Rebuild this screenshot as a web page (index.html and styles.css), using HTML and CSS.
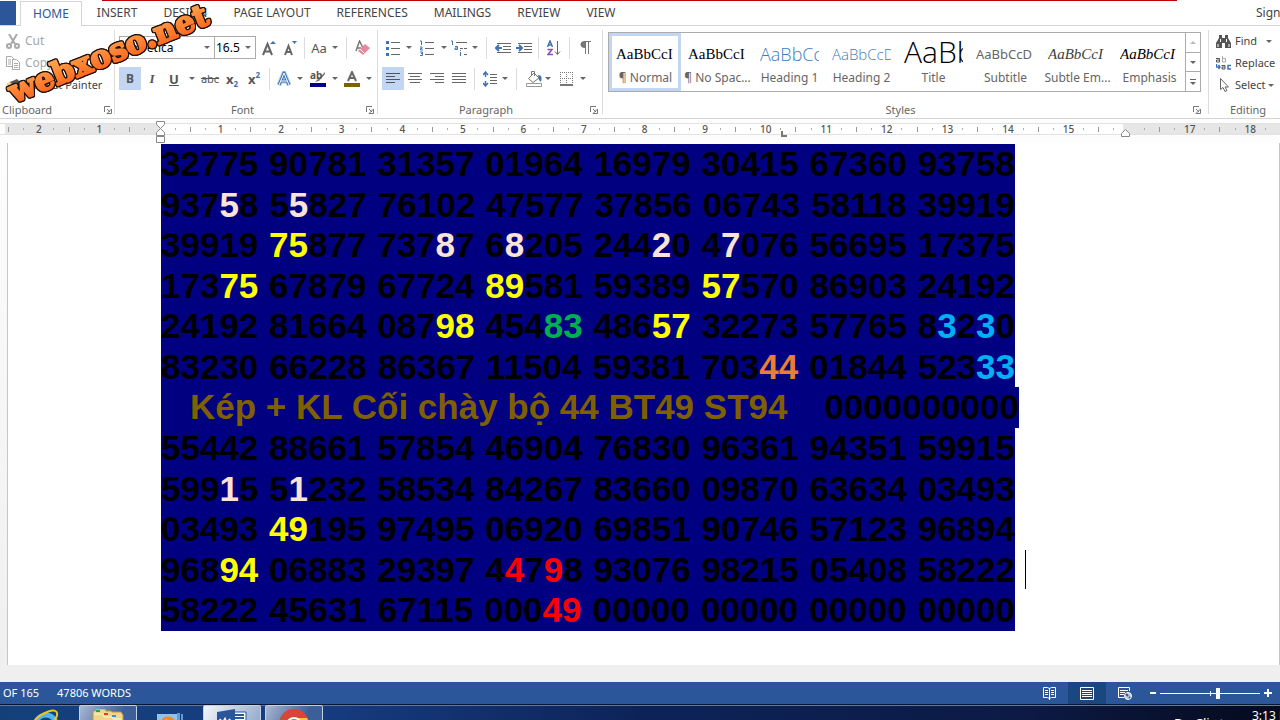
FILE: index.html
```html
<!DOCTYPE html>
<html lang="en">
<head>
<meta charset="utf-8">
<title>Document</title>
<link rel="stylesheet" href="styles.css">
</head>
<body>
<div class="app">
  <header class="tabs">
    <button class="file" aria-label="File"></button>
    <nav class="tablist">
      <button class="tab active">HOME</button>
      <button class="tab">INSERT</button>
      <button class="tab">DESIGN</button>
      <button class="tab">PAGE LAYOUT</button>
      <button class="tab">REFERENCES</button>
      <button class="tab">MAILINGS</button>
      <button class="tab">REVIEW</button>
      <button class="tab">VIEW</button>
    </nav>
    <a class="signin" href="#">Sign</a>
  </header>

  <section class="ribbon">
    <div class="group clipboard">
      <div class="commands">
        <button class="command off"><svg width="14" height="15" viewBox="0 0 14 15" fill="none" stroke="#a9a9a9" stroke-width="2"><path d="M3 0l6 10M11 0L5 10"/><circle cx="3" cy="12" r="2"/><circle cx="11" cy="12" r="2"/></svg>Cut</button>
        <button class="command off"><svg width="14" height="14" viewBox="0 0 14 14" fill="#fff" stroke="#aaa"><path d="M.5.5h5l2 2v8h-7zM2 4h3M2 6h3M2 8h3"/><path d="M6.500 3.500h4l3 3v7h-7zM8 7.500h4M8 9.500h4M8 11.500h4"/></svg>Copy</button>
        <button class="command"><svg width="14" height="14" viewBox="0 0 14 14"><path d="M0 6l5-3 4 5-4 5z" fill="#f2cf8c"/><path d="M4 4l7-3 3 3-5 5z" fill="#555"/></svg>Format Painter</button>
      </div>
      <div class="caption"><span>Clipboard</span><button class="launcher" aria-label="Clipboard options"><svg width="8" height="8" viewBox="0 0 8 8" fill="none" stroke="#777"><path d="M.5 6V.5H6M3 3l3 3M7.500 3v4.500H3z"/></svg></button></div>
    </div>

    <div class="group font">
      <div class="tools">
        <label class="combo family"><select aria-label="Font"><option>Helvetica</option></select><i class="arrow"></i></label>
        <label class="combo size"><select aria-label="Font size"><option>16.5</option></select><i class="arrow"></i></label>
        <button class="tool w26" aria-label="Grow font"><svg width="14" height="16" viewBox="0 0 14 16"><path d="M1 15L5.500 4 10 15M3 11.500h5" fill="none" stroke="#666" stroke-width="2"/><path d="M8 4l3-3 3 3z" fill="#3e74b5"/></svg></button>
        <button class="tool w18" aria-label="Shrink font"><svg width="14" height="16" viewBox="0 0 14 16"><path d="M1 15l3.500-9L8 15M2.500 12h4" fill="none" stroke="#666" stroke-width="2"/><path d="M8 1h5l-2.500 3z" fill="#3e74b5"/></svg></button>
        <i class="rule w8"></i>
        <button class="tool w22 case" aria-label="Change case">Aa</button><i class="arrow w10"></i>
        <i class="rule w12"></i>
        <button class="tool w22" aria-label="Clear formatting"><svg width="16" height="16" viewBox="0 0 16 16"><path d="M1 11L4.500 1 8 8M2 8h4" fill="none" stroke="#777" stroke-width="1.500"/><path d="M3 11l7-7 5 4-7 7z" fill="#e8879c"/><path d="M5 9l4.500 4.500" stroke="#fff"/></svg></button>
      </div>
      <div class="tools">
        <button class="tool w22 on bold">B</button>
        <button class="tool w22 italic">I</button>
        <button class="tool w22 under">U</button><i class="arrow w14"></i>
        <button class="tool w22 strike">abc</button>
        <button class="tool w22 script">x<sub>2</sub></button>
        <button class="tool w22 script">x<sup>2</sup></button>
        <i class="rule w8"></i>
        <button class="tool w22" aria-label="Text effects"><svg width="16" height="16" viewBox="0 0 16 16" fill="none" stroke-linejoin="round"><path d="M3 14L8 2l5 12M5 10h6" stroke="#b9d3ee" stroke-width="5"/><path d="M3 14L8 2l5 12M5 10h6" stroke="#3e74b5" stroke-width="3"/><path d="M3 14L8 2l5 12M5 10h6" stroke="#fff"/></svg></button><i class="arrow w10"></i>
        <button class="tool w26 marker" aria-label="Highlight colour"><span>ab</span><svg width="16" height="16" viewBox="0 0 16 16"><path d="M15 1L8 8l-3 3 4-1 6-7z" fill="#777"/><path d="M0 12h16v4H0z" fill="#000080"/></svg></button><i class="arrow w8"></i>
        <button class="tool w26" aria-label="Font colour"><svg width="16" height="16" viewBox="0 0 16 16"><path d="M4 10L8 1l4 9M5.500 7h5" fill="none" stroke="#666" stroke-width="2"/><path d="M0 12h16v4H0z" fill="#7f6000"/></svg></button><i class="arrow w8"></i>
      </div>
      <div class="caption"><span>Font</span><button class="launcher" aria-label="Font options"><svg width="8" height="8" viewBox="0 0 8 8" fill="none" stroke="#777"><path d="M.5 6V.5H6M3 3l3 3M7.500 3v4.500H3z"/></svg></button></div>
    </div>

    <div class="group paragraph">
      <div class="tools">
        <button class="tool w22" aria-label="Bullets"><svg width="14" height="16" viewBox="0 0 14 16"><path d="M0 1h3v3H0zM0 7h3v3H0zM0 13h3v3H0z" fill="#3e74b5"/><path d="M5 2.500h9M5 8.500h9M5 14.500h9" stroke="#666"/></svg></button><i class="arrow w10"></i>
        <button class="tool w26" aria-label="Numbering"><svg width="14" height="16" viewBox="0 0 14 16" fill="none"><path d="M0 1h1.500v4M0 7h2v1.500H.5V10H3M0 12h2.500v3.500H0M1 13.500h1" stroke="#3e74b5"/><path d="M5 2.500h9M5 8.500h9M5 14.500h9" stroke="#666"/></svg></button><i class="arrow w8"></i>
        <button class="tool w24" aria-label="Multilevel list"><svg width="17" height="16" viewBox="0 0 17 16" fill="none"><path d="M0 1h1.500v4M4 6.500h2.500v3H4v-1.500h2M9.500 10v1M9.500 12v4" stroke="#3e74b5"/><path d="M5 2.500h11M9 8.500h3M13 8.500h3M13 14.500h3" stroke="#666"/></svg></button><i class="arrow w8"></i>
        <i class="rule w14"></i>
        <button class="tool w20" aria-label="Decrease indent"><svg width="16" height="12" viewBox="0 0 16 12" fill="none"><path d="M2 1.500h14M8 4.500h8M8 7.500h8M2 10.500h14" stroke="#666"/><path d="M7 6H1M4 3L1 6l3 3" stroke="#3e74b5" stroke-width="2"/></svg></button>
        <button class="tool w22" aria-label="Increase indent"><svg width="16" height="12" viewBox="0 0 16 12" fill="none"><path d="M2 1.500h14M8 4.500h8M8 7.500h8M2 10.500h14" stroke="#666"/><path d="M0 6h6M3 3l3 3-3 3" stroke="#3e74b5" stroke-width="2"/></svg></button>
        <i class="rule w8"></i>
        <button class="tool w24" aria-label="Sort"><svg width="14" height="16" viewBox="0 0 14 16" fill="none"><path d="M.5 7L3 1l2.500 6M1.500 5h3" stroke="#3e74b5" stroke-width="1.500"/><path d="M.5 9.500h4.500l-4 5h5" stroke="#8e4fae" stroke-width="1.500"/><path d="M10.500 1v13M8 11.500l2.500 3 2.500-3" stroke="#666"/></svg></button>
        <i class="rule w6"></i>
        <button class="tool w26" aria-label="Show marks"><svg width="11" height="13" viewBox="0 0 11 13"><path d="M4 .5h7M5.500 1v12M8.500 1v12" fill="none" stroke="#777"/><path d="M5 0v7C-1 7-1 0 5 0z" fill="#777"/></svg></button>
      </div>
      <div class="tools">
        <button class="tool w22 on" aria-label="Align left"><svg width="14" height="11" viewBox="0 0 14 11" stroke="#555"><path d="M0 .5h14M0 3.500h9M0 6.500h14M0 9.500h9"/></svg></button>
        <button class="tool w22" aria-label="Centre"><svg width="14" height="11" viewBox="0 0 14 11" stroke="#666"><path d="M0 .5h14M2 3.500h10M0 6.500h14M2 9.500h10"/></svg></button>
        <button class="tool w22" aria-label="Align right"><svg width="14" height="11" viewBox="0 0 14 11" stroke="#666"><path d="M0 .5h14M5 3.500h9M0 6.500h14M5 9.500h9"/></svg></button>
        <button class="tool w22" aria-label="Justify"><svg width="14" height="11" viewBox="0 0 14 11" stroke="#666"><path d="M0 .5h14M0 3.500h14M0 6.500h14M0 9.500h14"/></svg></button>
        <i class="rule w8"></i>
        <button class="tool w24" aria-label="Line spacing"><svg width="14" height="16" viewBox="0 0 14 16" fill="none"><path d="M2.500 1v5M0 4l2.500-3L5 4M2.500 15v-5M0 12l2.500 3L5 12" stroke="#3e74b5" stroke-width="1.500"/><path d="M7 3.500h7M7 6.500h7M7 9.500h7M7 12.500h7" stroke="#666"/></svg></button><i class="arrow w6"></i>
        <i class="rule w16"></i>
        <button class="tool w20" aria-label="Shading"><svg width="16" height="16" viewBox="0 0 16 16" fill="none"><path d="M2.500 7.500L8 2l5 5-6 4.500zM5.500 5V.5h3V5" stroke="#777"/><path d="M12 4c4 0 4 3 3 7l-2-2z" fill="#3e74b5"/><path d="M.5 12.500h15v3H.5z" stroke="#999"/></svg></button><i class="arrow w8"></i>
        <button class="tool w28" aria-label="Borders"><svg width="13" height="14" viewBox="0 0 13 14" fill="none" stroke="#777"><path d="M0 .5h13M0 6.500h13M.5 0v12M6.500 0v12M12.500 0v12" stroke-dasharray="1 1"/><path d="M0 13h13" stroke-width="2"/></svg></button><i class="arrow w6"></i>
      </div>
      <div class="caption"><span>Paragraph</span><button class="launcher" aria-label="Paragraph options"><svg width="8" height="8" viewBox="0 0 8 8" fill="none" stroke="#777"><path d="M.5 6V.5H6M3 3l3 3M7.500 3v4.500H3z"/></svg></button></div>
    </div>

    <div class="group styles">
      <div class="gallery">
        <button class="style chosen"><span class="sample serif">AaBbCcI</span><span class="name">¶ Normal</span></button>
        <button class="style"><span class="sample serif">AaBbCcI</span><span class="name">¶ No Spac...</span></button>
        <button class="style"><span class="sample h1">AaBbCc</span><span class="name">Heading 1</span></button>
        <button class="style"><span class="sample h2">AaBbCcD</span><span class="name">Heading 2</span></button>
        <button class="style"><span class="sample title">AaBb</span><span class="name">Title</span></button>
        <button class="style"><span class="sample sub">AaBbCcD</span><span class="name">Subtitle</span></button>
        <button class="style"><span class="sample serif subtle">AaBbCcI</span><span class="name">Subtle Em...</span></button>
        <button class="style"><span class="sample serif emph">AaBbCcI</span><span class="name">Emphasis</span></button>
        <div class="scroller">
          <button aria-label="Previous"><i class="arrow up"></i></button>
          <button aria-label="Next"><i class="arrow"></i></button>
          <button aria-label="More"><i class="arrow more"></i></button>
        </div>
      </div>
      <div class="caption"><span>Styles</span><button class="launcher" aria-label="Styles options"><svg width="8" height="8" viewBox="0 0 8 8" fill="none" stroke="#777"><path d="M.5 6V.5H6M3 3l3 3M7.500 3v4.500H3z"/></svg></button></div>
    </div>

    <div class="group editing">
      <div class="commands">
        <button class="command"><svg width="15" height="13" viewBox="0 0 15 13" fill="#555"><path d="M3 0h3v3h3V0h3v3l3 5v5H9V8H6v5H0V8l3-5z"/><path d="M2 9v3M4.500 4v3M10.500 4v3M13 9v3" stroke="#fff"/></svg>Find<i class="arrow find"></i></button>
        <button class="command"><svg width="15" height="15" viewBox="0 0 15 15" fill="none"><path d="M0 2.500h3.500V6H.5V4h3" stroke="#555"/><path d="M6.500 0v6h3V2.500h-3" stroke="#aaa"/><path d="M5.500 9.500H9V13H6v-2h3" stroke="#555"/><path d="M15 9.500h-3V13h3M.5 8v3H4M2.500 9L4 11l-1.500 2" stroke="#3e74b5" stroke-width="1.500"/></svg>Replace</button>
        <button class="command"><svg width="15" height="14" viewBox="0 0 15 14" fill="#fff" stroke="#666"><path d="M4.500.5v11l2.500-2 2 4 2-1-2-3.500h3.500z"/></svg>Select<i class="arrow near"></i></button>
      </div>
      <div class="caption"><span>Editing</span></div>
    </div>
  </section>

  <div class="ruler">
    <div class="scale">
      <i class="tick"></i><i></i><b>2</b><i></i>
      <i class="tick"></i><i></i><b>1</b><i></i>
      <i class="tick"></i><i></i><b></b><i></i>
      <i class="tick"></i><i></i><b>1</b><i></i>
      <i class="tick"></i><i></i><b>2</b><i></i>
      <i class="tick"></i><i></i><b>3</b><i></i>
      <i class="tick"></i><i></i><b>4</b><i></i>
      <i class="tick"></i><i></i><b>5</b><i></i>
      <i class="tick"></i><i></i><b>6</b><i></i>
      <i class="tick"></i><i></i><b>7</b><i></i>
      <i class="tick"></i><i></i><b>8</b><i></i>
      <i class="tick"></i><i></i><b>9</b><i></i>
      <i class="tick"></i><i></i><b>10</b><i></i>
      <i class="tick"></i><i></i><b>11</b><i></i>
      <i class="tick"></i><i></i><b>12</b><i></i>
      <i class="tick"></i><i></i><b>13</b><i></i>
      <i class="tick"></i><i></i><b>14</b><i></i>
      <i class="tick"></i><i></i><b>15</b><i></i>
      <i class="tick"></i><i></i><b></b><i></i>
      <i class="tick"></i><i></i><b>17</b><i></i>
      <i class="tick"></i><i></i><b>18</b><i></i>
    </div>
    <svg class="marker-left" width="9" height="22" viewBox="0 0 9 22" fill="#fff" stroke="#888"><path d="M.5.5h8v3l-4 4-4-4zM4.500 7.500l4 4v3h-8v-3zM.5 15.500h8v6h-8z"/></svg>
    <svg class="marker-tab" width="6" height="6" viewBox="0 0 6 6"><path d="M1 0v5h5" fill="none" stroke="#777" stroke-width="2"/></svg>
    <svg class="marker-right" width="9" height="8" viewBox="0 0 9 8" fill="#fff" stroke="#888"><path d="M.5 7.500v-3l4-4 4 4v3z"/></svg>
  </div>

  <main class="workspace">
    <article class="page">
      <div class="lines">
        <p>32775 90781 31357 01964 16979 30415 67360 93758</p>
        <p>937<span class="pink">5</span>8 5<span class="pink">5</span>827 76102 47577 37856 06743 58118 39919</p>
        <p>39919 <span class="yellow">75</span>877 737<span class="pink">8</span>7 6<span class="pink">8</span>205 244<span class="pink">2</span>0 4<span class="pink">7</span>076 56695 17375</p>
        <p>173<span class="yellow">75</span> 67879 67724 <span class="yellow">89</span>581 59389 <span class="yellow">57</span>570 86903 24192</p>
        <p>24192 81664 087<span class="yellow">98</span> 454<span class="green">83</span> 486<span class="yellow">57</span> 32273 57765 8<span class="sky">3</span>2<span class="sky">3</span>0</p>
        <p>83230 66228 86367 11504 59381 703<span class="orange">44</span> 01844 523<span class="sky">33</span></p>
        <p class="note"><span class="brown">Kép + KL Cối chày bộ 44 BT49 ST94</span><span>0000000000</span></p>
        <p>55442 88661 57854 46904 76830 96361 94351 59915</p>
        <p>599<span class="pink">1</span>5 5<span class="pink">1</span>232 58534 84267 83660 09870 63634 03493</p>
        <p>03493 <span class="yellow">49</span>195 97495 06920 69851 90746 57123 96894</p>
        <p class="current">968<span class="yellow">94</span> 06883 29397 4<span class="red">4</span>7<span class="red">9</span>8 93076 98215 05408 58222</p>
        <p>58222 45631 67115 000<span class="red">49</span> 00000 00000 00000 00000</p>
      </div>
    </article>
  </main>

  <footer class="status">
    <span>OF 165</span><span>47806 WORDS</span>
    <div class="views">
      <button aria-label="Read mode"><svg width="13" height="13" viewBox="0 0 13 13" fill="none" stroke="#fff"><path d="M.5.5h4l2 1 2-1h4v10h-4l-2 1-2-1h-4zM6.500 1v12M2 3.500h3M2 5.500h3M2 7.500h3M8 3.500h3M8 5.500h3M8 7.500h3"/></svg></button>
      <button class="on" aria-label="Print layout"><svg width="14" height="13" viewBox="0 0 14 13" fill="none" stroke="#fff"><path d="M.5.5h13v12H.5zM2 3.500h10M2 5.500h10M2 7.500h10M2 9.500h10"/></svg></button>
      <button aria-label="Web layout"><svg width="14" height="13" viewBox="0 0 14 13" fill="none" stroke="#fff"><path d="M6 10.500H.5V.5h11V4M2 3.500h8M2 5.500h5M2 7.500h4"/><circle cx="10" cy="9" r="3.500" fill="#b8cbe4"/><path d="M8 7l2 2M11 10l1 1" stroke="#2b579a" stroke-width="2"/></svg></button>
    </div>
    <div class="zoom">
      <button aria-label="Zoom out"><svg width="6" height="8"><path d="M0 4h6" stroke="#fff" stroke-width="2"/></svg></button>
      <input type="range" min="0" max="100" value="58" aria-label="Zoom">
      <button aria-label="Zoom in"><svg width="8" height="8"><path d="M0 4h8M4 0v8" stroke="#fff" stroke-width="2"/></svg></button>
    </div>
  </footer>

  <footer class="taskbar">
    <button class="app-button bare" aria-label="Internet Explorer"><svg width="32" height="17" viewBox="0 0 32 17" fill="none"><path d="M5 17C6 3 25 2 27 17" stroke="#4fb7ea" stroke-width="5"/><path d="M10 17c1-6 10-6 12 0" stroke="#d7f1fc" stroke-width="2"/><path d="M3 14C10 3 29-3 27 6c0 2-2 5-4 7" stroke="#f2c51c" stroke-width="2"/></svg></button>
    <button class="app-button" aria-label="Explorer"><svg width="32" height="14" viewBox="0 0 32 14"><path d="M1 14V2h2l1-2h9l1 2h5l1 1h9l2 3v8z" fill="#efd68a" stroke="#b9974a"/><path d="M4 1h4v2H4z" fill="#1ba83c"/><path d="M12 4h4v2h-4z" fill="#d8432e"/><path d="M20 6h4v2h-4z" fill="#3a8fe0"/><path d="M2 5h9l1 3h8l1 2h9" stroke="#fff6cf" fill="none"/></svg></button>
    <button class="app-button bare media" aria-label="Media player"><svg width="27" height="11" viewBox="0 0 27 11"><path d="M0 1h22v10H0z" fill="#8fc4e8"/><path d="M20 0h3v11h-3zM24 1h2v10h-2z" fill="#5d9fd2"/><path d="M3 11c1-10 15-10 16 0z" fill="#f08a24"/><path d="M9 6l5 5H9z" fill="#fff"/></svg></button>
    <button class="app-button light" aria-label="Word"><svg width="30" height="15" viewBox="0 0 30 15"><path d="M15 3h14v12H15z" fill="#fff" stroke="#2b579a"/><path d="M18 6h9M18 9h9M18 12h9" stroke="#2b579a" stroke-width="2"/><path d="M0 3L18 0v15H0z" fill="#2b579a"/><path d="M3 10l2 5 3-5 2 5 3-5" stroke="#fff" stroke-width="2" fill="none"/></svg></button>
    <button class="app-button" aria-label="Chrome"><svg width="30" height="16" viewBox="0 0 30 16"><circle cx="15" cy="15" r="15" fill="#db4437"/><path d="M15 9h13a15 15 0 0 1 2 7H15z" fill="#f9c732"/><path d="M0 16V13l3-4 6 7z" fill="#1e9e54"/><circle cx="15" cy="16" r="8" fill="#fff"/><circle cx="15" cy="16" r="6" fill="#4285f4"/></svg></button>
    <span class="tray">Do Clic t</span>
    <time>3:13 PM</time>
  </footer>

  <svg class="watermark" width="220" height="110" viewBox="0 0 220 110">
    <defs><linearGradient id="flame" x1="0" y1="0" x2="0" y2="1"><stop offset="0.200" stop-color="#ffa04a"/><stop offset="1" stop-color="#ff5a14"/></linearGradient></defs>
    <text transform="translate(14 103) rotate(-22)">webxoso.net</text>
  </svg>
</div>
</body>
</html>
```
FILE: styles.css
```css
* { box-sizing: border-box; }

body {
  margin: 0;
  background: #fff;
  color: #444;
  font: 12px/16px "Noto Sans", "Open Sans", sans-serif;
}

button {
  margin: 0;
  padding: 0;
  border: 0;
  background: none;
  color: inherit;
  font: inherit;
}

svg { display: block; flex: none; }

.app {
  position: relative;
  display: flex;
  flex-direction: column;
  height: 100vh;
  overflow: hidden;
}

/* Tab strip */
.tabs {
  display: flex;
  flex: none;
  height: 26px;
  padding-top: 1px;
  border-bottom: 1px solid #d4d4d4;
  background: linear-gradient(#c00000, #c00000) 102px 0 / calc(100% - 205px) 1px no-repeat;
}
.file { width: 16px; margin-right: 4px; background: #2b579a; }
.tablist { display: flex; flex: 1; }
.tab { padding: 0 13px; }
.tab.active {
  height: 25px;
  margin-right: 2px;
  padding: 0 12px;
  border: 1px solid #d4d4d4;
  border-bottom: 0;
  background: #fff;
  color: #2b579a;
}
.signin {
  width: 24px;
  padding-top: 4px;
  color: #444;
  text-decoration: none;
  white-space: nowrap;
}

/* Ribbon */
.ribbon {
  display: flex;
  flex: none;
  height: 93px;
  padding: 4px 0;
  border-bottom: 1px solid #d4d4d4;
}
.group {
  display: flex;
  flex: none;
  flex-direction: column;
  gap: 8px;
  padding: 6px 4px 0;
  border-right: 1px solid #dcdcdc;
}
.clipboard { gap: 0; width: 115px; padding: 0 2px; }
.font { width: 263px; padding-right: 3px; }
.paragraph { width: 225px; }
.styles { flex: 1; min-width: 0; padding: 2px 7px 0 5px; }
.editing { gap: 0; width: 71px; padding: 0 0 0 7px; border: 0; }

.caption {
  display: flex;
  align-items: center;
  margin: auto 0 -4px;
  color: #666;
  font-size: 11px;
  text-align: center;
}
.caption span { flex: 1; }
.clipboard .caption span { text-align: left; }

.commands { display: flex; flex-direction: column; }
.command {
  display: flex;
  align-items: center;
  gap: 5px;
  height: 22px;
  font-size: 11px;
  white-space: nowrap;
}
.clipboard .command { padding-left: 4px; }
.editing .command { gap: 4px; }
.off { color: #a6a6a6; font-size: 12px; }

.tools { display: flex; align-items: center; height: 23px; }
.tool {
  display: flex;
  align-items: center;
  justify-content: center;
  height: 23px;
  color: #555;
}
.on { background: #c2d5f2; }
.w6 { width: 6px; } .w8 { width: 8px; } .w10 { width: 10px; } .w12 { width: 12px; }
.w14 { width: 14px; } .w16 { width: 16px; } .w18 { width: 18px; } .w20 { width: 20px; }
.w22 { width: 22px; } .w24 { width: 24px; } .w26 { width: 26px; } .w28 { width: 28px; }

.arrow { display: flex; flex: none; justify-content: center; }
.arrow::before {
  content: "";
  border: 3px solid transparent;
  border-top-color: #666;
  border-bottom: 0;
}
.arrow.up::before { border-top: 0; border-bottom: 3px solid #bbb; }
.arrow.more { flex-direction: column; gap: 2px; }
.arrow.more::after { content: ""; order: -1; height: 1px; background: #666; }
.arrow.find { margin-left: 5px; }
.arrow.near { margin-left: -2px; }

.rule { display: flex; justify-content: center; height: 22px; }
.rule::before { content: ""; width: 1px; background: #dcdcdc; }

.combo {
  display: flex;
  flex: none;
  align-items: center;
  height: 23px;
  padding: 0 4px 0 2px;
  border: 1px solid #ababab;
}
.combo.family { width: 95px; border-right: 0; }
.combo.size { width: 42px; padding-left: 1px; }
.combo select {
  flex: 1;
  min-width: 0;
  padding: 0;
  border: 0;
  background: none;
  color: #000;
  font: inherit;
  appearance: none;
}

.case { font-size: 13px; }
.bold { font-weight: bold; }
.italic { font: italic bold 13px "Liberation Serif", serif; }
.under { font-size: 13px; font-weight: bold; text-decoration: underline; }
.strike { font-size: 11px; text-decoration: line-through; }
.script { font-size: 13px; font-weight: bold; }
.script sub, .script sup { color: #3e74b5; font-size: 8px; line-height: 8px; }
.script sub { align-self: flex-end; padding-bottom: 2px; }
.script sup { align-self: flex-start; padding-top: 4px; }
.marker { position: relative; }
.marker span { position: absolute; top: 0; left: 5px; font-size: 10px; font-weight: bold; }

/* Style gallery */
.gallery {
  display: flex;
  height: 60px;
  border: 1px solid #ababab;
}
.style {
  display: flex;
  flex: 1;
  flex-direction: column;
  min-width: 0;
  padding: 4px 3px 0 4px;
  border: 3px solid transparent;
  text-align: center;
  white-space: nowrap;
}
.style.chosen { border-color: #c2d5f2; }
.sample { height: 30px; overflow: hidden; line-height: 28px; text-align: left; }
.name { margin: 0 -8px; color: #666; }
.h1 { color: #3e7cba; font-size: 18px; font-weight: 300; font-family: "Open Sans", sans-serif; }
.h2 { color: #3e7cba; font-size: 15px; font-weight: 300; font-family: "Open Sans", sans-serif; }
.title {
  height: 25px;
  margin: 1px 0 4px;
  color: #000;
  font: 300 30px/22px "Open Sans", sans-serif;
}
.sub { color: #666; font-size: 13px; }
.serif { color: #000; font: 15px/28px "Liberation Serif", serif; }
.subtle { color: #404040; font-style: italic; }
.emph { font-style: italic; }
.scroller {
  display: flex;
  flex-direction: column;
  width: 15px;
  border-left: 1px solid #ababab;
}
.scroller button { display: flex; flex: 1; align-items: center; justify-content: center; }
.scroller button + button { border-top: 1px solid #ababab; }

/* Ruler */
.ruler { position: relative; flex: none; height: 24px; padding-top: 4px; background: #fdfdfd; }
.scale {
  display: grid;
  grid-template-columns: repeat(84, 1fr);
  align-items: center;
  justify-items: center;
  height: 12px;
  padding: 0 7px 0 1px;
  background: linear-gradient(90deg, #fdfdfd 5px, #e6e6e6 5px 160px, #fff 160px calc(100% - 157px), #e6e6e6 calc(100% - 157px));
  box-shadow: inset 0 1px #e2e2e2, inset 0 -1px #e2e2e2;
}
.scale i { width: 1px; height: 2px; background: #aaa; }
.scale .tick { height: 5px; background: #999; }
.scale b { width: 15px; color: #555; font-size: 10px; font-weight: 500; line-height: 12px; text-align: center; }
.marker-left { position: absolute; top: 2px; left: 156px; }
.marker-tab { position: absolute; top: 12px; left: 781px; }
.marker-right { position: absolute; top: 10px; right: 150px; }

/* Document */
.workspace {
  flex: 1;
  min-height: 0;
  padding: 0 0 17px 7px;
  background: linear-gradient(#fdfdfd, #efefef);
}
.page {
  height: 100%;
  padding: 1px 0 0 153px;
  border-right: 1px solid #c6c6c6;
  border-left: 1px solid #c6c6c6;
  background: #fff;
}
.lines {
  display: grid;
  grid-template-columns: 100%;
  grid-auto-rows: 1fr;
  width: 854px;
  min-height: 487px;
  background: #000080;
  color: #000;
  font: bold 35px/40px "Liberation Sans", Arial, sans-serif;
}
.lines p { margin: 0; text-align-last: justify; white-space: nowrap; }
.lines .note {
  display: flex;
  justify-content: space-between;
  width: 858px;
  padding-left: 29px;
  background: #000080;
}
.lines .current { width: 865px; padding-right: 11px; background: linear-gradient(#000, #000) 100% 0 / 1px 39px no-repeat; }
.pink { color: #fbe4d5; }
.yellow { color: #ff0; }
.green { color: #00b050; }
.sky { color: #00b0f0; }
.orange { color: #ed7d31; }
.red { color: #f00; }
.brown { color: #7f6000; }

/* Status bar */
.status {
  display: flex;
  flex: none;
  align-items: center;
  gap: 18px;
  height: 22px;
  padding: 0 8px 0 3px;
  background: #2b579a;
  color: #fff;
  font-size: 11px;
}
.views { display: flex; align-self: stretch; margin-left: auto; }
.views button { display: flex; align-items: center; justify-content: center; width: 38px; }
.views .on { background: #1a4780; }
.zoom { display: flex; align-items: center; gap: 4px; margin-left: -12px; }
.zoom input {
  width: 100px;
  height: 12px;
  margin: 0;
  appearance: none;
  background:
    linear-gradient(#fff, #fff) 50% 50% / 1px 5px no-repeat,
    linear-gradient(#fff, #fff) 0 50% / 100% 1px no-repeat;
}
.zoom input::-webkit-slider-thumb { width: 4px; height: 11px; appearance: none; background: #fff; }

/* Taskbar */
.taskbar {
  display: flex;
  flex: none;
  gap: 4px;
  height: 16px;
  padding-left: 17px;
  overflow: hidden;
  border-top: 1px solid #0a1630;
  background: linear-gradient(90deg, #14407a, #163c80 25%, #0d2358 50%, #0c1a45 80%, #050a1c);
  box-shadow: inset 0 1px #5a79a8;
  color: #fff;
}
.app-button {
  display: flex;
  justify-content: center;
  width: 58px;
  height: 40px;
  padding-top: 3px;
  border: 1px solid #c3cfe2;
  border-radius: 2px;
  background: linear-gradient(120deg, #a9b8d2, #3c5e99 40px);
}
.app-button.light { background: linear-gradient(120deg, #f2f5fa, #8fa5c8 60px); }
.app-button.bare { border-color: transparent; background: none; }
.app-button.media { padding-top: 7px; }
.tray { margin-left: auto; padding-top: 10px; font-size: 13px; white-space: nowrap; }
.taskbar time { width: 28px; margin-left: 24px; padding-top: 3px; overflow: hidden; white-space: nowrap; }

/* Site watermark laid over the ribbon */
.watermark {
  position: absolute;
  top: 0;
  left: 0;
  filter: drop-shadow(1px 0 #1c1008) drop-shadow(-1px 0 #1c1008) drop-shadow(0 1px #1c1008) drop-shadow(0 -1px #1c1008);
  pointer-events: none;
}
.watermark text {
  fill: url(#flame);
  stroke: url(#flame);
  stroke-width: 2px;
  stroke-linejoin: round;
  font: bold 31px "DejaVu Serif", serif;
}
```
